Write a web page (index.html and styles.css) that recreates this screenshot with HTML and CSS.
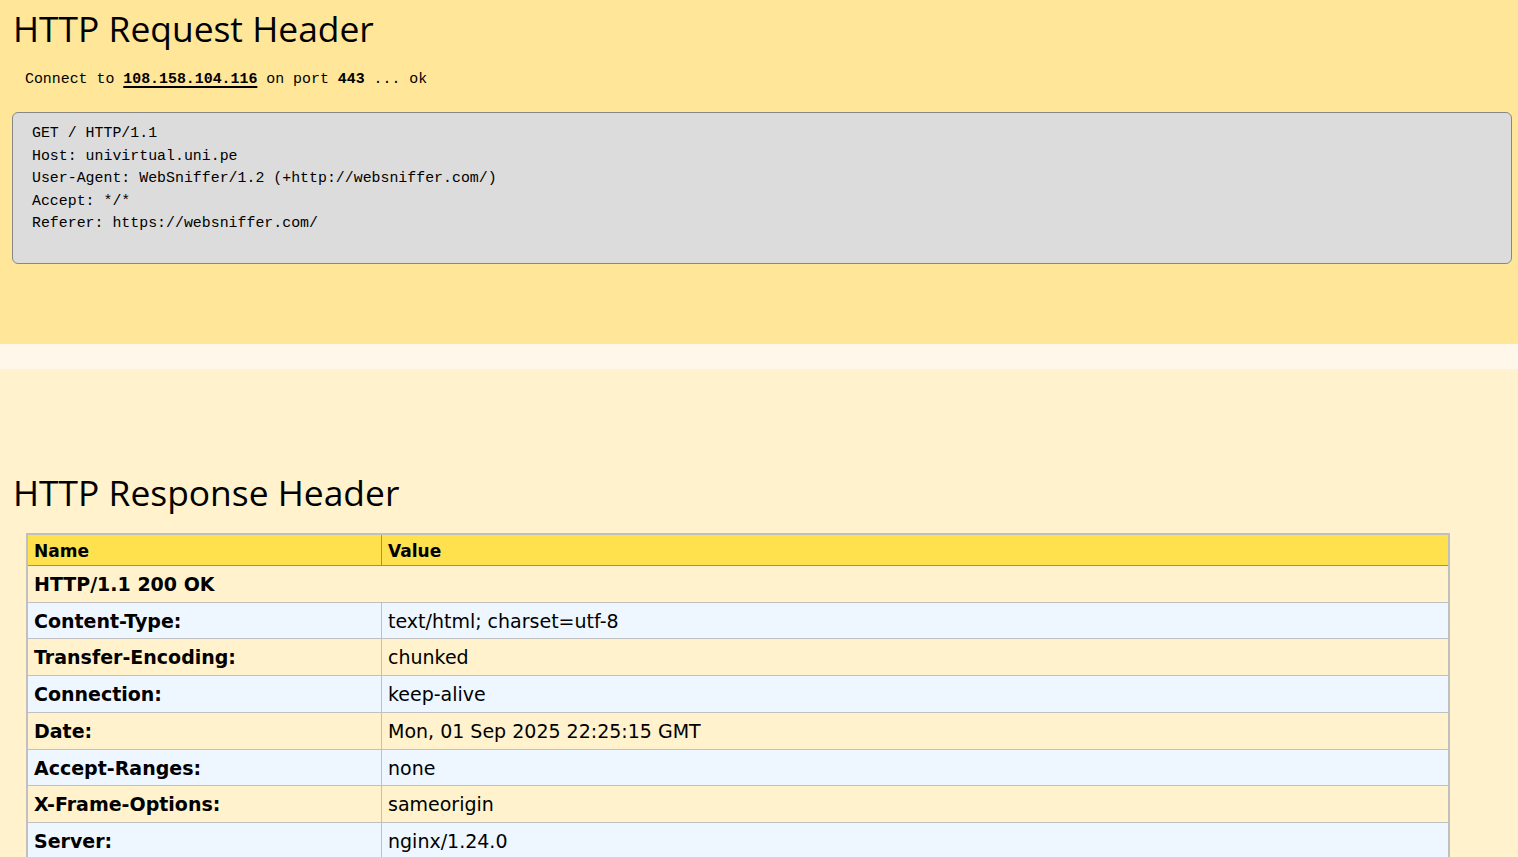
FILE: index.html
```html
<!DOCTYPE html>
<html>
<head>
<meta charset="utf-8">
<title>HTTP Header</title>
<link rel="stylesheet" href="styles.css">
</head>
<body>
<section class="request">
  <h1 class="title">HTTP Request Header</h1>
  <p class="connect">Connect to <a class="ip" href="#">108.158.104.116</a> on port <b>443</b> ... ok</p>
  <pre class="req">GET / HTTP/1.1
Host: univirtual.uni.pe
User-Agent: WebSniffer/1.2 (+http://websniffer.com/)
Accept: */*
Referer: https://websniffer.com/

</pre>
</section>
<div class="band"></div>
<section class="response">
  <h2 class="title">HTTP Response Header</h2>
  <table class="headers">
    <thead>
      <tr><th class="name">Name</th><th>Value</th></tr>
    </thead>
    <tbody>
      <tr class="odd"><td colspan="2" class="key">HTTP/1.1 200 OK</td></tr>
      <tr class="even"><td class="key">Content-Type:</td><td>text/html; charset=utf-8</td></tr>
      <tr class="odd"><td class="key">Transfer-Encoding:</td><td>chunked</td></tr>
      <tr class="even"><td class="key">Connection:</td><td>keep-alive</td></tr>
      <tr class="odd"><td class="key">Date:</td><td>Mon, 01 Sep 2025 22:25:15 GMT</td></tr>
      <tr class="even"><td class="key">Accept-Ranges:</td><td>none</td></tr>
      <tr class="odd"><td class="key">X-Frame-Options:</td><td>sameorigin</td></tr>
      <tr class="even"><td class="key">Server:</td><td>nginx/1.24.0</td></tr>
    </tbody>
  </table>
</section>
</body>
</html>
```
FILE: styles.css
```css
html, body {
  margin: 0;
  padding: 0;
}
body {
  background: #fff2cc;
  color: #000;
  font-family: "DejaVu Sans", Verdana, sans-serif;
}
.request {
  background: #ffe699;
  height: 344px;
  padding: 0 6px 0 12px;
  box-sizing: border-box;
  overflow: hidden;
}
.title {
  font-family: "Open Sans", "Noto Sans", sans-serif;
  font-weight: 400;
  font-size: 35.4px;
  line-height: 50px;
  margin: 0;
  padding-left: 1px;
}
.request .title {
  padding-top: 3px;
}
.connect {
  font-family: "Liberation Mono", "Courier New", monospace;
  font-size: 14.9px;
  line-height: 22px;
  margin: 15px 0 22px 13px;
}
.ip {
  color: #000;
  font-weight: bold;
  text-decoration: underline;
  text-decoration-thickness: 2px;
  text-underline-offset: 3px;
}
.req {
  margin: 0;
  background: #dcdcdc;
  border: 1px solid #888;
  border-radius: 6px;
  padding: 9px 19px 6px;
  font-family: "Liberation Mono", "Courier New", monospace;
  font-size: 14.9px;
  line-height: 22.5px;
}
.band {
  height: 25px;
  background: #fff8ea;
}
.response {
  padding: 98px 0 0 12px;
}
.headers {
  margin: 16px 0 0 14px;
  width: 1424px;
  border-collapse: collapse;
  border: 2px solid #c0c0c0;
  font-size: 19px;
}
.headers th {
  background: #ffe14d;
  text-align: left;
  font-size: 17px;
  line-height: 20px;
  padding: 6px 6px 4px;
  border-bottom: 1px solid #b8960c;
  border-right: 1px solid #b8960c;
}
.headers th.name {
  width: 341px;
}
.headers td {
  line-height: 23.7px;
  padding: 7px 6px 5px;
  border: 1px solid #c0c0c0;
}
.headers td.key {
  font-weight: bold;
}
.odd td {
  background: #fff2cc;
}
.even td {
  background: #eef6ff;
}
```
